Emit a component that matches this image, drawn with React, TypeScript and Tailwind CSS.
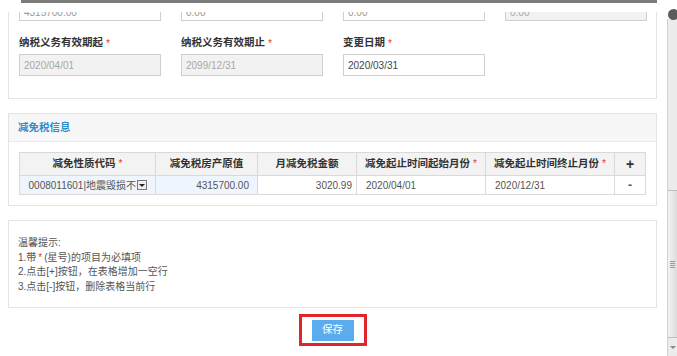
const topInputs = [
  { value: "4315700.00", disabled: false },
  { value: "0.00", disabled: false },
  { value: "0.00", disabled: false },
  { value: "0.00", disabled: true },
]

const dateFields = [
  { label: "纳税义务有效期起", value: "2020/04/01", disabled: true },
  { label: "纳税义务有效期止", value: "2099/12/31", disabled: true },
  { label: "变更日期", value: "2020/03/31", disabled: false },
]

const columns = [
  { label: "减免性质代码", required: true, width: "w-[136px]" },
  { label: "减免税房产原值", required: false, width: "w-[102px]" },
  { label: "月减免税金额", required: false, width: "w-[99px]" },
  { label: "减免起止时间起始月份", required: true, width: "w-[129px]" },
  { label: "减免起止时间终止月份", required: true, width: "w-[129px]" },
]

function Star() {
  return <span className="ml-[3px] text-[10px] font-normal text-[#e0393e]">*</span>
}

function Field({ value, disabled, faded }: { value: string; disabled: boolean; faded?: boolean }) {
  return (
    <div
      className={
        "flex h-[22px] w-[142px] items-center border border-[#cfcfcf] pl-[4px] text-[10px] " +
        (faded ? "pt-[5px] " : "") +
        (disabled ? "bg-[#f2f2f2] text-[#a8a8a8]" : faded ? "bg-white text-[#999]" : "bg-white text-[#444]")
      }
    >
      {value}
    </div>
  )
}

function Scrollbar() {
  return (
    <div className="relative h-full w-[12px] bg-white">
      <div className="absolute left-[3px] top-[9px] h-[11px] w-[11px] rounded-full bg-[#5c5c5c]" />
      <div className="ml-[2px] mt-[19px] flex h-[337px] flex-col border-l border-[#d2d2d2] bg-[#ececec]">
        <div className="h-[171px]" />
        <div className="flex h-[148px] items-center justify-center border-y border-[#bdbdbd] bg-gradient-to-r from-[#f3f3f3] to-[#dcdcdc]">
          <div className="flex flex-col gap-[1px]">
            <div className="h-px w-[5px] bg-[#9a9a9a]" />
            <div className="h-px w-[5px] bg-[#9a9a9a]" />
            <div className="h-px w-[5px] bg-[#9a9a9a]" />
            <div className="h-px w-[5px] bg-[#9a9a9a]" />
          </div>
        </div>
        <div className="flex flex-1 items-center justify-center">
          <div className="h-0 w-0 border-x-[3px] border-t-[3px] border-x-transparent border-t-[#8a8a8a]" />
        </div>
      </div>
    </div>
  )
}

export default function App() {
  return (
    <div className="flex h-[356px] w-[677px] overflow-hidden bg-white font-['Liberation_Sans','Noto_Sans_CJK_SC',sans-serif] text-[#333]">
      <main className="relative h-full w-[665px] overflow-hidden">
        <div className="absolute left-0 top-0 z-10 h-[12px] w-full bg-white">
          <div className="ml-[21px] h-[3px] w-[636px] bg-[#7b7b7b]" />
        </div>

        <div className="-mt-[12px]">
          {/* form panel */}
          <section className="mx-[8px] border border-[#e4e4e4] pb-[22px] pl-[10px] pt-[10px]">
            <div className="grid grid-cols-[142px_142px_142px_142px] gap-x-[20px]">
              {topInputs.map((f, i) => (
                <Field key={i} value={f.value} disabled={f.disabled} faded />
              ))}
            </div>
            <div className="mt-[14px] grid grid-cols-[142px_142px_142px_142px] gap-x-[20px]">
              {dateFields.map((f) => (
                <div key={f.label}>
                  <div className="mb-[3px] flex h-[16px] items-center text-[10.5px] font-bold text-[#333]">
                    {f.label}
                    <Star />
                  </div>
                  <Field value={f.value} disabled={f.disabled} />
                </div>
              ))}
            </div>
          </section>

          {/* tax relief panel */}
          <section className="mx-[8px] mt-[14px] border border-[#e4e4e4]">
            <div className="flex h-[28px] items-center border-b border-[#ebebeb] bg-[#f7f7f7] pl-[9px] text-[10.5px] font-bold text-[#2f8ccc]">
              减免税信息
            </div>
            <div className="px-[10px] pb-[10px] pt-[10px]">
              <table className="w-[626px] table-fixed border-collapse text-[10px]">
                <colgroup>
                  {columns.map((c) => (
                    <col key={c.label} className={c.width} />
                  ))}
                  <col className="w-[31px]" />
                </colgroup>
                <thead>
                  <tr className="h-[23px] bg-[#f3f3f3]">
                    {columns.map((c) => (
                      <th key={c.label} className="border border-[#d9d9d9] text-center text-[10.5px] font-bold text-[#333]">
                        {c.label}
                        {c.required && <Star />}
                      </th>
                    ))}
                    <th className="border border-[#d9d9d9] text-center text-[14px] font-bold text-[#333]">+</th>
                  </tr>
                </thead>
                <tbody>
                  <tr className="h-[19px] text-[#555]">
                    <td className="border border-[#d9d9d9] bg-[#eef5fc] px-0">
                      <div className="flex items-center justify-end pr-[8px]">
                        <span className="whitespace-nowrap text-[10px]">0008011601|地震毁损不</span>
                        <span className="ml-[1px] flex h-[10px] w-[10px] items-center justify-center border border-[#777] bg-[#f0f0f0]">
                          <span className="h-0 w-0 border-x-[3px] border-t-[3px] border-x-transparent border-t-[#222]" />
                        </span>
                      </div>
                    </td>
                    <td className="border border-[#d9d9d9] bg-[#eef5fc] pr-[8px] text-right">4315700.00</td>
                    <td className="border border-[#d9d9d9] pr-[4px] text-right">3020.99</td>
                    <td className="border border-[#d9d9d9] pl-[9px]">2020/04/01</td>
                    <td className="border border-[#d9d9d9] pl-[9px]">2020/12/31</td>
                    <td className="border border-[#d9d9d9] text-center text-[12px] font-bold">-</td>
                  </tr>
                </tbody>
              </table>
            </div>
          </section>

          {/* tips panel */}
          <section className="mx-[8px] mt-[14px] border border-[#e4e4e4] pb-[13px] pl-[9px] pt-[15px] text-[10px] leading-[14.5px] text-[#555]">
            <p>温馨提示:</p>
            <p>
              1.带<span className="mx-[2px] text-[#e0393e]">*</span>(星号)的项目为必填项
            </p>
            <p>2.点击[+]按钮，在表格增加一空行</p>
            <p>3.点击[-]按钮，删除表格当前行</p>
          </section>

          <div className="mt-[6px] flex justify-center">
            <div className="flex h-[32px] w-[68px] items-center justify-center border-[3px] border-[#e0262c]">
              <button className="h-[21px] w-[42px] bg-[#5aacef] text-[10.5px] text-white">保存</button>
            </div>
          </div>
        </div>
      </main>
      <Scrollbar />
    </div>
  )
}
